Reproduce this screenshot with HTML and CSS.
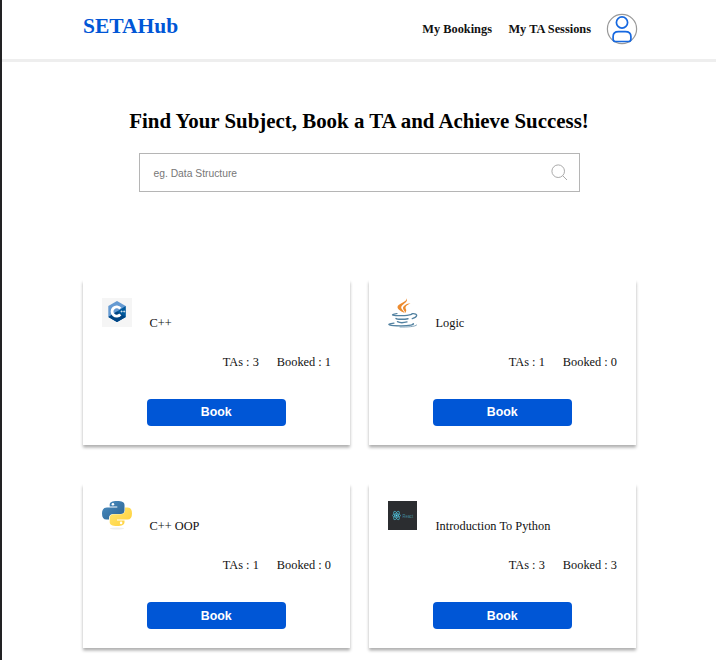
FILE: index.html
```html
<!DOCTYPE html>
<html lang="en">
<head>
<meta charset="utf-8">
<title>SETAHub</title>
<link rel="stylesheet" href="styles.css">
</head>
<body>
<header class="header">
  <div class="logo">SETAHub</div>
  <nav class="nav">
    <span class="link bookings">My Bookings</span>
    <span class="link sessions">My TA Sessions</span>
    <svg class="avatar" viewBox="0 0 32 32" fill="none">
      <circle cx="16" cy="16" r="14.600" stroke="#999" stroke-width="1.200"/>
      <g stroke="#1668e0" stroke-width="1.700"><circle cx="16" cy="9.500" r="5.600"/><path d="M12.500 18.700h6.800c3.700 0 5.600 1.800 5.600 4.800v2.400c0 1.700-.8 2.600-2.400 2.600h-13c-1.600 0-2.400-.9-2.400-2.600v-2.400c0-3 1.700-4.800 5.400-4.800z"/></g>
    </svg>
  </nav>
</header>
<main>
  <h1 class="title">Find Your Subject, Book a TA and Achieve Success!</h1>
  <div class="search">
    <span class="placeholder">eg. Data Structure</span>
    <svg class="search-icon" viewBox="0 0 17 17" fill="none" stroke="#aaa" stroke-width="1"><circle cx="7.200" cy="7.200" r="6.300"/><path d="M11.700 11.700l4.300 4.300"/></svg>
  </div>
  <section class="cards">
    <article class="card">
      <div class="subject">
        <svg class="icon" viewBox="0 0 30 30">
          <path fill="#f5f5f5" d="M0 0h30v29H0z"/>
          <path fill="#659ad2" d="M15 3l8.700 5v11L15 24l-8.700-5V8z"/>
          <path fill="#00599c" d="M6.500 19L15 13.500 23.700 8v11L15 24z"/>
          <path fill="#004482" d="M6.500 19L15 13.500l8.700 5.500L15 24z"/>
          <path d="M18.300 10.700a4.600 4.600 0 1 0 0 5.600" fill="none" stroke="#fff" stroke-width="2.800"/>
          <path d="M18.500 13.500h2.200m-1.100-1.100v2.200m1.500-1.100h2.200m-1.100-1.100v2.200" stroke="#fff" stroke-width=".6"/>
        </svg>
        <span class="name">C++</span>
      </div>
      <div class="stats"><span>TAs : 3</span><span>Booked : 1</span></div>
      <button class="book">Book</button>
    </article>
    <article class="card">
      <div class="subject">
        <svg class="icon" viewBox="0 0 30 30">
          <g fill="#ed8b2e"><path d="M18.500.3c2.800 4-6 6.300-5.300 9.600.3 1.400 2.800 3 3.300 5.100-3.500-2-7-3.600-7-6.100C9.500 5.500 19.500 4.300 18.500.3z"/><path d="M22.500 5.200c-3.200 1.500-5.200 3-5 4.800.2 1.300 2 2.200-.6 5.200.5-2-1.700-3-1.900-4.900-.2-2.700 3.700-4.700 7.500-5.100z"/></g>
          <g fill="none" stroke="#5382a1" stroke-linecap="round"><path stroke-width="1.200" d="M9 15.500c-9 1.600-3 2.200 4 2.200 4 0 8-.4 10.500-1.300"/><path stroke-width="1.400" d="M24 15.700c7-.7 5.300 3.800.3 4.900"/><path stroke-width="1.400" d="M8 20.500c1 1 8 1.100 12 .2M9.500 23.700c2 1.100 7 .9 9.500.2"/><path stroke-width="1.200" d="M6 25.100c-10 1.100-4.500 2.700 7 2.700 8 0 14.500-1.200 12-2.300"/><path stroke-width=".7" d="M12 29c7 .2 15.500-.3 16.700-2"/></g>
        </svg>
        <span class="name">Logic</span>
      </div>
      <div class="stats"><span>TAs : 1</span><span>Booked : 0</span></div>
      <button class="book">Book</button>
    </article>
    <article class="card">
      <div class="subject">
        <svg class="icon" viewBox="0 0 30 30">
          <defs>
            <linearGradient id="blue" x2="1" y2="1"><stop stop-color="#4b8fc4"/><stop offset="1" stop-color="#2c628f"/></linearGradient>
            <linearGradient id="yellow" x2="1" y2="1"><stop stop-color="#ffe873"/><stop offset="1" stop-color="#ffce38"/></linearGradient>
          </defs>
          <path fill="url(#blue)" d="M15 0c5 0 7.500 1 7.500 4v5.500c0 2.400-1.500 3.500-4 3.500h-7c-2.800 0-4.500 1.500-4.500 4v1.500H4.500C1.500 18.500 0 16.500 0 12.500S2 6.500 5 6.500h10.300v-.9H7.700V4C7.700 1 10 0 15 0z"/>
          <path fill="url(#yellow)" d="M15 25c-5 0-7.300-1.300-7.300-4v-4.500c0-2 1.500-3.300 4-3.300h7c2.600 0 4.300-1.700 4.300-4V6.500h2.500c3 0 4.500 2 4.500 6s-1.600 6-4.500 6H15v.9h7.500V21c0 2.700-2.500 4-7.500 4z"/>
          <circle cx="10.900" cy="3.200" r="1.300" fill="#fff"/><circle cx="19.100" cy="21.900" r="1.300" fill="#fff"/>
          <ellipse cx="15" cy="27.500" rx="7" ry="1" fill="#eee"/>
        </svg>
        <span class="name">C++ OOP</span>
      </div>
      <div class="stats"><span>TAs : 1</span><span>Booked : 0</span></div>
      <button class="book">Book</button>
    </article>
    <article class="card">
      <div class="subject">
        <svg class="icon" viewBox="0 0 30 30">
          <path fill="#2b2d30" d="M0 0h29v29H0z"/>
          <g fill="none" stroke="#4bb5cb" stroke-width=".7"><ellipse cx="8.500" cy="14.500" rx="4" ry="1.700"/><ellipse cx="8.500" cy="14.500" rx="4.800" ry="1.800" transform="rotate(60 8.500 14.500)"/><ellipse cx="8.500" cy="14.500" rx="4.800" ry="1.800" transform="rotate(120 8.500 14.500)"/></g>
          <circle cx="8.500" cy="14.500" r="1" fill="#61dafb"/>
          <text x="14.500" y="16.500" class="react" textLength="10.500" lengthAdjust="spacingAndGlyphs">React</text>
        </svg>
        <span class="name">Introduction To Python</span>
      </div>
      <div class="stats"><span>TAs : 3</span><span>Booked : 3</span></div>
      <button class="book">Book</button>
    </article>
  </section>
</main>
</body>
</html>
```
FILE: styles.css
```css
* { box-sizing: border-box; }
body {
  margin: 0;
  height: 660px;
  overflow: hidden;
  border-left: 2px solid #222224;
  background: #fff;
  color: #111;
  font-family: "Liberation Serif", "Times New Roman", serif;
  font-size: 12.35px;
}
.header {
  display: flex;
  justify-content: space-between;
  height: 62px;
  padding: 0 78.500px 0 81px;
  border-bottom: 3px solid #eee;
}
.logo {
  padding-top: 14px;
  color: #0056d6;
  font-size: 21.5px;
  font-weight: bold;
  line-height: 25px;
}
.nav { display: flex; height: 58px; align-items: center; font-weight: bold; }
.link { white-space: nowrap; }
.bookings { margin-right: 16.500px; }
.sessions { margin-right: 14.500px; }
.avatar { width: 32px; height: 32px; }
.title {
  margin: 46px 0 0;
  color: #000;
  font-size: 20.9px;
  line-height: 26px;
  text-align: center;
  white-space: nowrap;
}
.search {
  display: flex;
  align-items: center;
  justify-content: space-between;
  width: 441px;
  height: 39px;
  margin: 19px 0 0 137px;
  padding: 0 11px 0 13.500px;
  border: 1px solid #b5b5b5;
  color: #777;
  font: 10.3px "Liberation Sans", Arial, sans-serif;
}
.placeholder { padding-top: 2px; }
.search-icon { width: 17px; height: 17px; }
.cards {
  display: grid;
  grid-template-columns: 267.5px 267.5px;
  gap: 38px 18.500px;
  margin: 87px 0 0 80.500px;
}
.card {
  height: 165.500px;
  padding: 18.500px 19px 0;
  box-shadow: 0 2.500px 3px rgba(0, 0, 0, .32);
}
.subject { display: flex; height: 32px; }
.icon { flex: none; width: 30px; height: 30px; }
.name { margin: 18px 0 0 18px; line-height: 15px; white-space: nowrap; }
.stats {
  display: flex;
  justify-content: flex-end;
  gap: 18px;
  margin-top: 25px;
  line-height: 15px;
}
.book {
  display: block;
  width: 139.500px;
  height: 27px;
  margin: 29px 0 0 45px;
  padding: 0;
  border: 0;
  border-radius: 4px;
  background: #0056d6;
  color: #fff;
  font: bold 12.350px "Liberation Sans", Arial, sans-serif;
}
.react { fill: #438b9c; font: 5px "Liberation Sans", sans-serif; }
```
